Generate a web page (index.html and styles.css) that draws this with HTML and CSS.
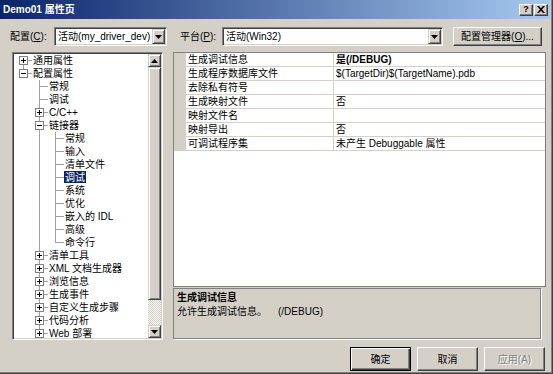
FILE: index.html
```html
<!DOCTYPE html>
<html lang="zh-CN">
<head>
  <meta charset="UTF-8">
  <title>Demo01 属性页</title>
  <link rel="stylesheet" href="styles.css">
</head>
<body>
  <div class="window">
    <div class="titlebar">
      <span class="title">Demo01 属性页</span>
      <span class="cap-btn help">?</span>
      <span class="cap-btn close">
        <svg width="8" height="7" viewBox="0 0 8 7"><path d="M0 0h2l2 2.2L6 0h2L5 3.5 8 7H6L4 4.8 2 7H0l3-3.5z" fill="#000"/></svg>
      </span>
    </div>

    <div class="config-row">
      <span class="label label-cfg">配置(<u>C</u>):</span>
      <div class="combo combo-cfg">
        <span class="combo-text">活动(my_driver_dev)</span>
        <span class="combo-arrow"><svg width="7" height="4" viewBox="0 0 7 4"><path d="M0 0h7L3.5 4z" fill="#000"/></svg></span>
      </div>
      <span class="label label-plat">平台(<u>P</u>):</span>
      <div class="combo combo-plat">
        <span class="combo-text">活动(Win32)</span>
        <span class="combo-arrow"><svg width="7" height="4" viewBox="0 0 7 4"><path d="M0 0h7L3.5 4z" fill="#000"/></svg></span>
      </div>
      <span class="btn mgr-btn">配置管理器(<u>O</u>)...</span>
    </div>

    <div class="main">
      <div class="tree">
        <div class="tree-list">
          <div class="node"><span class="ln r0"><i class="box plus"></i></span><span class="lbl">通用属性</span></div>
          <div class="node"><span class="ln rl"><i class="box"></i></span><span class="lbl">配置属性</span></div>
          <div class="node"><span class="ln"></span><span class="ln t"></span><span class="lbl">常规</span></div>
          <div class="node"><span class="ln"></span><span class="ln t"></span><span class="lbl">调试</span></div>
          <div class="node"><span class="ln"></span><span class="ln t"><i class="box plus"></i></span><span class="lbl">C/C++</span></div>
          <div class="node"><span class="ln"></span><span class="ln t"><i class="box"></i></span><span class="lbl">链接器</span></div>
          <div class="node"><span class="ln"></span><span class="ln v"></span><span class="ln t"></span><span class="lbl">常规</span></div>
          <div class="node"><span class="ln"></span><span class="ln v"></span><span class="ln t"></span><span class="lbl">输入</span></div>
          <div class="node"><span class="ln"></span><span class="ln v"></span><span class="ln t"></span><span class="lbl">清单文件</span></div>
          <div class="node"><span class="ln"></span><span class="ln v"></span><span class="ln t"></span><span class="lbl selected">调试</span></div>
          <div class="node"><span class="ln"></span><span class="ln v"></span><span class="ln t"></span><span class="lbl">系统</span></div>
          <div class="node"><span class="ln"></span><span class="ln v"></span><span class="ln t"></span><span class="lbl">优化</span></div>
          <div class="node"><span class="ln"></span><span class="ln v"></span><span class="ln t"></span><span class="lbl">嵌入的 IDL</span></div>
          <div class="node"><span class="ln"></span><span class="ln v"></span><span class="ln t"></span><span class="lbl">高级</span></div>
          <div class="node"><span class="ln"></span><span class="ln v"></span><span class="ln l"></span><span class="lbl">命令行</span></div>
          <div class="node"><span class="ln"></span><span class="ln t"><i class="box plus"></i></span><span class="lbl">清单工具</span></div>
          <div class="node"><span class="ln"></span><span class="ln t"><i class="box plus"></i></span><span class="lbl">XML 文档生成器</span></div>
          <div class="node"><span class="ln"></span><span class="ln t"><i class="box plus"></i></span><span class="lbl">浏览信息</span></div>
          <div class="node"><span class="ln"></span><span class="ln t"><i class="box plus"></i></span><span class="lbl">生成事件</span></div>
          <div class="node"><span class="ln"></span><span class="ln t"><i class="box plus"></i></span><span class="lbl">自定义生成步骤</span></div>
          <div class="node"><span class="ln"></span><span class="ln t"><i class="box plus"></i></span><span class="lbl">代码分析</span></div>
          <div class="node"><span class="ln"></span><span class="ln t"><i class="box plus"></i></span><span class="lbl">Web 部署</span></div>
        </div>
        <div class="scroll">
          <span class="sb-btn"><svg width="7" height="4" viewBox="0 0 7 4"><path d="M0 4h7L3.5 0z" fill="#000"/></svg></span>
          <span class="sb-thumb"></span>
          <span class="sb-track"></span>
          <span class="sb-btn"><svg width="7" height="4" viewBox="0 0 7 4"><path d="M0 0h7L3.5 4z" fill="#000"/></svg></span>
        </div>
      </div>

      <div class="props">
        <div class="grid">
          <div class="rows">
            <span class="gut"></span><span class="name">生成调试信息</span><span class="val bold">是(/DEBUG)</span>
            <span class="gut"></span><span class="name">生成程序数据库文件</span><span class="val">$(TargetDir)$(TargetName).pdb</span>
            <span class="gut"></span><span class="name">去除私有符号</span><span class="val"></span>
            <span class="gut"></span><span class="name">生成映射文件</span><span class="val">否</span>
            <span class="gut"></span><span class="name">映射文件名</span><span class="val"></span>
            <span class="gut"></span><span class="name">映射导出</span><span class="val">否</span>
            <span class="gut"></span><span class="name">可调试程序集</span><span class="val">未产生 Debuggable 属性</span>
          </div>
        </div>
        <div class="desc">
          <div class="desc-title">生成调试信息</div>
          <div>允许生成调试信息。<span class="desc-flag">(/DEBUG)</span></div>
        </div>
      </div>
    </div>

    <div class="footer">
      <span class="btn btn-default">确定</span>
      <span class="btn">取消</span>
      <span class="btn disabled">应用(A)</span>
    </div>
  </div>
</body>
</html>
```

FILE: styles.css
```css
* { box-sizing: border-box; }
body {
  margin: 0;
  font-family: "Liberation Sans", "Noto Sans CJK SC", sans-serif;
  font-size: 10px;
  line-height: 13px;
  background: #d4d0c8;
  color: #000;
}
u { text-decoration: underline; }

.window {
  width: 553px;
  height: 374px;
  display: flex;
  flex-direction: column;
  border-right: 1px solid #404040;
  border-bottom: 1px solid #404040;
  box-shadow: inset -1px -1px #808080;
  overflow: hidden;
}

/* title bar */
.titlebar {
  height: 19px;
  margin-right: 2px;
  padding: 0 2px 0 3px;
  display: flex;
  align-items: center;
  gap: 1px;
  background: linear-gradient(to right, #0a246a, #a6caf0);
  color: #fff;
  font-weight: bold;
}
.title { flex: 1; }
.cap-btn {
  width: 14px;
  height: 12px;
  display: flex;
  align-items: center;
  justify-content: center;
  background: #d4d0c8;
  color: #000;
  font-size: 9px;
  border: 1px solid;
  border-color: #fff #404040 #404040 #fff;
  box-shadow: inset -1px -1px #808080;
}

/* raised / sunken bits */
.btn {
  display: flex;
  align-items: center;
  justify-content: center;
  background: #d4d0c8;
  border: 1px solid;
  border-color: #fff #404040 #404040 #fff;
  box-shadow: inset -1px -1px #808080;
}
.btn-default {
  border-color: #000;
  box-shadow: inset 1px 1px #fff, inset -1px -1px #404040, inset -2px -2px #808080;
}
.disabled {
  color: #808080;
  text-shadow: 1px 1px #fff;
}

.config-row {
  display: flex;
  align-items: center;
  height: 19px;
  margin-top: 8px;
  padding-left: 10px;
}
.label { line-height: 19px; }
.label-cfg { width: 44px; }
.label-plat { width: 42px; margin-left: 13px; }
.combo {
  height: 19px;
  display: flex;
  align-items: center;
  background: #fff;
  border: 1px solid;
  border-color: #808080 #fff #fff #808080;
  box-shadow: inset 1px 1px #404040, inset -1px -1px #d4d0c8;
  padding: 1px;
}
.combo-cfg { width: 113px; }
.combo-plat { width: 221px; }
.combo-text { flex: 1; padding-left: 2px; white-space: nowrap; }
.combo-arrow {
  width: 13px;
  height: 15px;
  display: flex;
  align-items: center;
  justify-content: center;
  background: #d4d0c8;
  border: 1px solid;
  border-color: #d4d0c8 #404040 #404040 #d4d0c8;
  box-shadow: inset 1px 1px #fff, inset -1px -1px #808080;
}
.mgr-btn {
  width: 89px;
  height: 19px;
  margin-left: 10px;
}

/* main area */
.main {
  display: flex;
  height: 288px;
  margin-top: 6px;
  padding-left: 12px;
}
.tree {
  width: 151px;
  display: flex;
  padding: 1px;
  background: #fff;
  border: 1px solid;
  border-color: #808080 #fff #fff #808080;
  box-shadow: inset 1px 1px #404040, inset -1px -1px #d4d0c8;
}
.tree-list {
  flex: 1;
  overflow: hidden;
  padding-left: 2px;
}
.node {
  display: flex;
  height: 13px;
  white-space: nowrap;
}
.ln {
  flex: none;
  width: 16px;
  height: 13px;
  display: flex;
  align-items: center;
  padding-left: 3px;
  background-repeat: no-repeat;
}
.ln.v {
  background-image: linear-gradient(#a0a0a0, #a0a0a0);
  background-position: 7px 0;
  background-size: 1px 13px;
}
.ln.t {
  background-image: linear-gradient(#a0a0a0, #a0a0a0), linear-gradient(#a0a0a0, #a0a0a0);
  background-position: 7px 0, 7px 6px;
  background-size: 1px 13px, 9px 1px;
}
.ln.l, .ln.rl {
  background-image: linear-gradient(#a0a0a0, #a0a0a0), linear-gradient(#a0a0a0, #a0a0a0);
  background-position: 7px 0, 7px 6px;
  background-size: 1px 7px, 9px 1px;
}
.ln.r0 {
  background-image: linear-gradient(#a0a0a0, #a0a0a0), linear-gradient(#a0a0a0, #a0a0a0);
  background-position: 7px 6px, 7px 6px;
  background-size: 1px 7px, 9px 1px;
}
.box {
  display: block;
  width: 9px;
  height: 9px;
  border: 1px solid #808080;
  background: linear-gradient(#000, #000) center / 5px 1px no-repeat, #fff;
}
.box.plus {
  background: linear-gradient(#000, #000) center / 5px 1px no-repeat,
              linear-gradient(#000, #000) center / 1px 5px no-repeat, #fff;
}
.lbl {
  padding: 0 1px;
  height: 12px;
  line-height: 13px;
}
.selected {
  background: #0a246a;
  color: #fff;
}

.scroll {
  width: 13px;
  display: flex;
  flex-direction: column;
}
.sb-btn, .sb-thumb {
  background: #d4d0c8;
  border: 1px solid;
  border-color: #d4d0c8 #404040 #404040 #d4d0c8;
  box-shadow: inset 1px 1px #fff, inset -1px -1px #808080;
}
.sb-btn {
  height: 13px;
  display: flex;
  align-items: center;
  justify-content: center;
}
.sb-thumb { height: 233px; }
.sb-track {
  flex: 1;
  background: repeating-conic-gradient(#fff 0 25%, #d4d0c8 0 50%) 0 0 / 2px 2px;
}

/* property grid */
.props {
  width: 373px;
  margin-left: 10px;
  display: flex;
  flex-direction: column;
  gap: 1px;
}
.grid {
  height: 235px;
  background: #fff;
  border: 1px solid #808080;
}
.rows {
  display: grid;
  grid-template-columns: 12px 148px 1fr;
  grid-auto-rows: 14px;
}
.gut { background: #d4d0c8; }
.name, .val {
  padding-left: 2px;
  white-space: nowrap;
  overflow: hidden;
  border-bottom: 1px solid #d4d0c8;
}
.name { border-right: 1px solid #d4d0c8; }
.bold { font-weight: bold; }

.desc {
  width: 368px;
  height: 51px;
  padding: 2px 3px;
  line-height: 14px;
  border: 1px solid #808080;
  box-shadow: 1px 1px #fff;
}
.desc-title { font-weight: bold; }
.desc-flag { margin-left: 11px; }

.footer {
  display: flex;
  justify-content: flex-end;
  gap: 6px;
  margin-top: 7px;
  padding-right: 7px;
}
.footer .btn {
  width: 61px;
  height: 24px;
}
```
